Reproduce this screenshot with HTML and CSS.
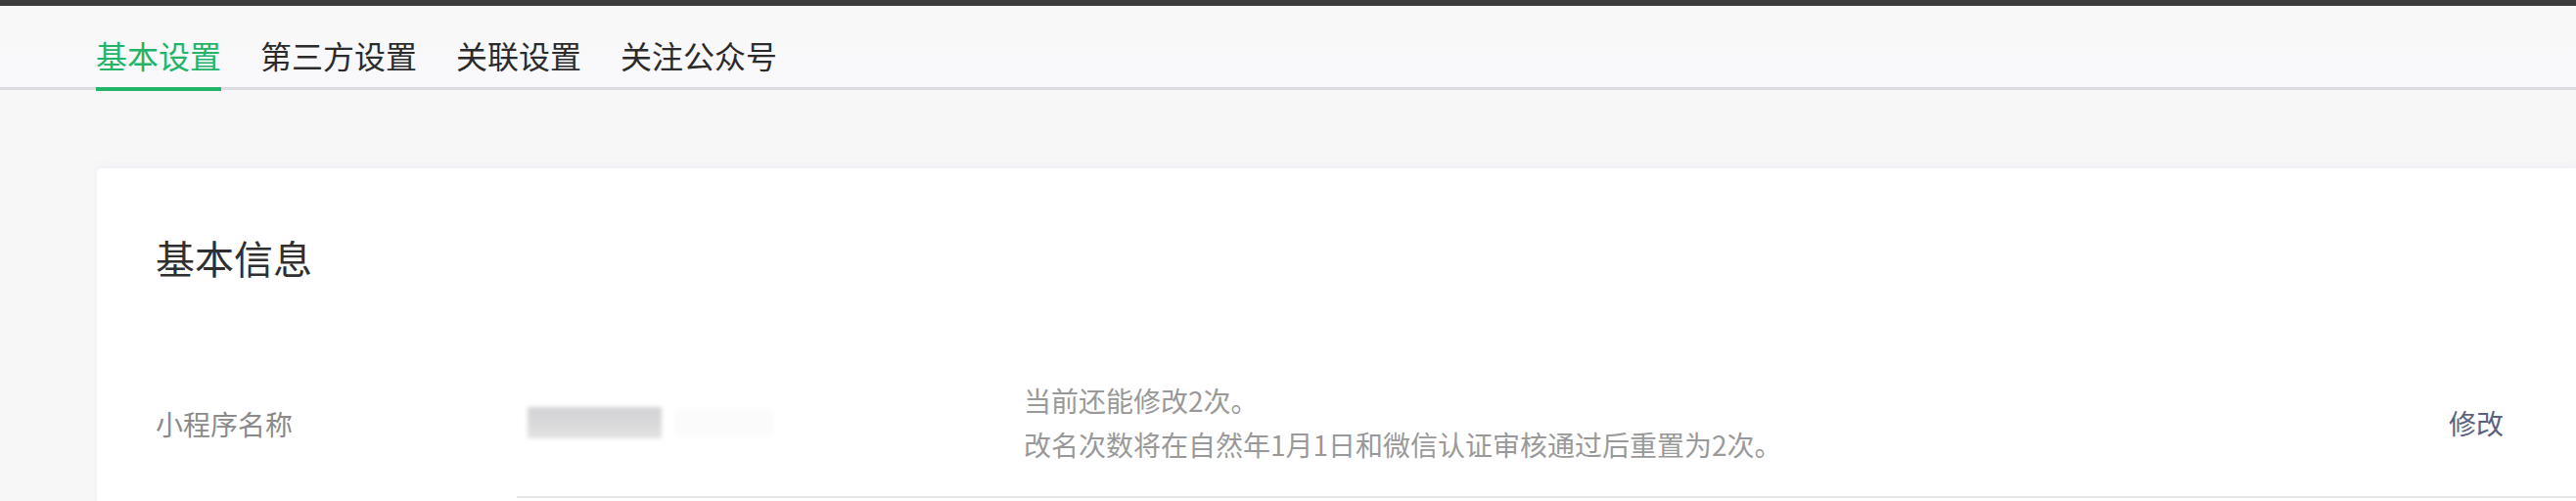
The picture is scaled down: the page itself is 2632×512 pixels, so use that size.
FILE: index.html
```html
<!DOCTYPE html>
<html lang="zh-CN">
<head>
    <meta charset="UTF-8">
    <meta name="viewport" content="width=device-width, initial-scale=1.0">
    <title>设置</title>
    <link rel="stylesheet" href="styles.css">
</head>
<body>
    <div class="topbar"></div>

    <div class="tabs">
        <a class="tab active">基本设置</a>
        <a class="tab">第三方设置</a>
        <a class="tab">关联设置</a>
        <a class="tab">关注公众号</a>
    </div>

    <div class="card">
        <h2 class="card-title">基本信息</h2>

        <div class="row">
            <div class="row-label">小程序名称</div>
            <div class="row-body">
                <div class="row-value">
                    <span class="masked"></span>
                    <span class="masked faint"></span>
                </div>
                <div class="row-hint">
                    <p>当前还能修改2次。</p>
                    <p>改名次数将在自然年1月1日和微信认证审核通过后重置为2次。</p>
                </div>
                <a class="row-action">修改</a>
            </div>
        </div>
    </div>
</body>
</html>
```

FILE: styles.css
```css
body {
    margin: 0;
    font-family: "Noto Sans CJK SC", "Noto Sans", sans-serif;
    background-color: #f7f7f8;
    overflow: hidden;
}
.topbar {
    height: 6px;
    background-color: #3c3c3c;
}
.tabs {
    display: flex;
    gap: 40px;
    padding-left: 98px;
    border-bottom: 3px solid #dcdbe0;
    background: linear-gradient(#f8f8f8, #f9f8fb);
}
.tab {
    font-size: 32px;
    line-height: 32px;
    color: #2b2b2b;
    padding: 34px 0 17px;
    border-bottom: 4px solid transparent;
    margin-bottom: -4px;
    cursor: pointer;
}
.tab.active {
    color: #22b469;
    border-bottom-color: #22b469;
}
.card {
    margin: 80px 0 0 99px;
    padding: 71px 0 3px 60px;
    background-color: #fff;
    border-radius: 4px 0 0 0;
    box-shadow: 0 -2px 6px rgba(240, 236, 244, 0.9);
}
.card-title {
    margin: 0 0 74px;
    font-size: 40px;
    line-height: 40px;
    font-weight: normal;
    color: #2f2f2f;
}
.row {
    display: flex;
    align-items: center;
}
.row-label {
    width: 369px;
    font-size: 28px;
    color: #8a8a8a;
}
.row-body {
    flex: 1;
    display: flex;
    align-items: center;
    padding: 30px 0;
    border-bottom: 2px solid #e6e6e8;
}
.row-value {
    width: 518px;
    display: flex;
    align-items: center;
    gap: 14px;
}
.masked {
    display: inline-block;
    width: 137px;
    height: 32px;
    margin-left: 11px;
    background: linear-gradient(#d3d3d6, #d9d9db 50%, #e2e2e3);
    filter: blur(2px);
}
.masked.faint {
    width: 100px;
    height: 28px;
    margin-left: 0;
    background: #fbfbfc;
}
.row-hint {
    flex: 1;
    font-size: 28px;
    line-height: 45px;
    color: #999;
}
.row-hint p {
    margin: 0;
}
.row-action {
    font-size: 28px;
    color: #5b6281;
    margin-right: 74px;
    cursor: pointer;
}
```
